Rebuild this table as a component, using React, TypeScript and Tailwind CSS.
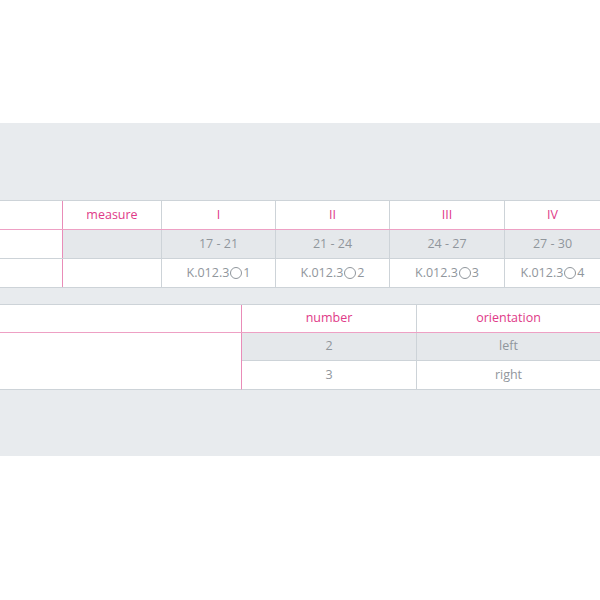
import React from "react";

const font = { fontFamily: '"Open Sans", "Liberation Sans", sans-serif' };

const sizes = ["17 - 21", "21 - 24", "24 - 27", "27 - 30"];
const codes = ["1", "2", "3", "4"];
const numerals = ["I", "II", "III", "IV"];

const widths = ["w-[114px]", "w-[114px]", "w-[115px]", "flex-1"];

const Code: React.FC<{ n: string }> = ({ n }) => (
  <span className="inline-flex items-center">
    K.012.3
    <span className="inline-block w-[12px] h-[12px] rounded-full border border-[#90969c] mx-[1px]" />
    {n}
  </span>
);

const App: React.FC = () => {
  return (
    <div className="w-[600px] h-[600px] bg-white overflow-hidden" style={font}>
      <div className="h-[123px]" />
      <div className="h-[333px] bg-[#e8ebee] pt-[77px] text-[12.5px] text-[#90969c]">
        {/* size table */}
        <div className="border-t border-[#cdd3d8] bg-white">
          <div className="flex h-[29px] border-b border-[#eea0c4] text-[#e03a88]">
            <div className="w-[63px] border-r border-[#e98cb8]" />
            <div className="w-[99px] border-r border-[#cdd3d8] flex items-center justify-center">
              measure
            </div>
            {numerals.map((n, i) => (
              <div
                key={n}
                className={`${widths[i]} ${i < 3 ? "border-r border-[#cdd3d8]" : ""} flex items-center justify-center`}
              >
                {n}
              </div>
            ))}
          </div>
          <div className="flex h-[29px] border-b border-[#cdd3d8]">
            <div className="w-[63px] border-r border-[#e98cb8] bg-white" />
            <div className="w-[99px] border-r border-[#cdd3d8] bg-[#e5e8eb]" />
            {sizes.map((s, i) => (
              <div
                key={s}
                className={`${widths[i]} ${i < 3 ? "border-r border-[#cdd3d8]" : ""} bg-[#e5e8eb] flex items-center justify-center`}
              >
                {s}
              </div>
            ))}
          </div>
          <div className="flex h-[29px] border-b border-[#cdd3d8]">
            <div className="w-[63px] border-r border-[#e98cb8]" />
            <div className="w-[99px] border-r border-[#cdd3d8]" />
            {codes.map((c, i) => (
              <div
                key={c}
                className={`${widths[i]} ${i < 3 ? "border-r border-[#cdd3d8]" : ""} flex items-center justify-center`}
              >
                <Code n={c} />
              </div>
            ))}
          </div>
        </div>

        {/* orientation table */}
        <div className="mt-[16px] border-t border-[#cdd3d8] bg-white">
          <div className="flex h-[28px] border-b border-[#eea0c4] text-[#e03a88]">
            <div className="w-[242px] border-r border-[#e98cb8]" />
            <div className="w-[175px] border-r border-[#cdd3d8] flex items-center justify-center">
              number
            </div>
            <div className="flex-1 flex items-center justify-center">orientation</div>
          </div>
          <div className="flex">
            <div className="w-[242px] border-r border-[#e98cb8] border-b border-b-[#cdd3d8]" />
            <div className="flex-1">
              <div className="flex h-[28px] border-b border-[#cdd3d8] bg-[#e5e8eb]">
                <div className="w-[175px] border-r border-[#cdd3d8] flex items-center justify-center">
                  2
                </div>
                <div className="flex-1 flex items-center justify-center">left</div>
              </div>
              <div className="flex h-[29px] border-b border-[#cdd3d8]">
                <div className="w-[175px] border-r border-[#cdd3d8] flex items-center justify-center">
                  3
                </div>
                <div className="flex-1 flex items-center justify-center">right</div>
              </div>
            </div>
          </div>
        </div>
      </div>
    </div>
  );
};

export default App;
